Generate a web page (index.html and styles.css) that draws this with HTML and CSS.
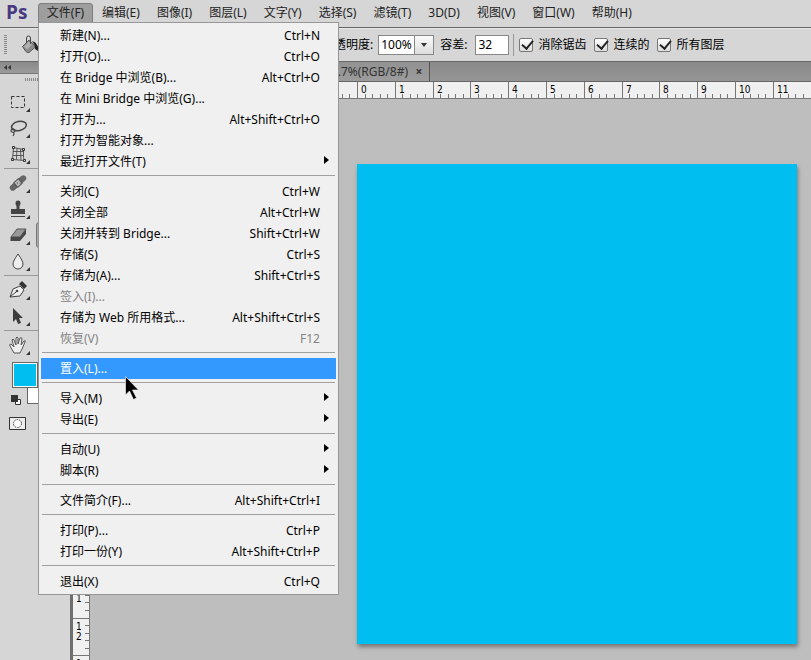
FILE: index.html
```html
<!DOCTYPE html>
<html lang="zh-CN">
<head>
<meta charset="utf-8">
<title>Photoshop</title>
<link rel="stylesheet" href="styles.css">
</head>
<body>
<header class="menubar">
  <span class="logo">Ps</span>
  <nav class="menus">
    <div class="menu-root">
      <button class="menu-title open">文件(F)</button>
      <div class="menu">
        <button class="item"><span>新建(N)...</span><kbd>Ctrl+N</kbd></button>
        <button class="item"><span>打开(O)...</span><kbd>Ctrl+O</kbd></button>
        <button class="item"><span>在 Bridge 中浏览(B)...</span><kbd>Alt+Ctrl+O</kbd></button>
        <button class="item"><span>在 Mini Bridge 中浏览(G)...</span></button>
        <button class="item"><span>打开为...</span><kbd>Alt+Shift+Ctrl+O</kbd></button>
        <button class="item"><span>打开为智能对象...</span></button>
        <button class="item sub"><span>最近打开文件(T)</span></button>
        <hr>
        <button class="item"><span>关闭(C)</span><kbd>Ctrl+W</kbd></button>
        <button class="item"><span>关闭全部</span><kbd>Alt+Ctrl+W</kbd></button>
        <button class="item"><span>关闭并转到 Bridge...</span><kbd>Shift+Ctrl+W</kbd></button>
        <button class="item"><span>存储(S)</span><kbd>Ctrl+S</kbd></button>
        <button class="item"><span>存储为(A)...</span><kbd>Shift+Ctrl+S</kbd></button>
        <button class="item" disabled><span>签入(I)...</span></button>
        <button class="item"><span>存储为 Web 所用格式...</span><kbd>Alt+Shift+Ctrl+S</kbd></button>
        <button class="item" disabled><span>恢复(V)</span><kbd>F12</kbd></button>
        <hr>
        <button class="item active"><span>置入(L)...</span></button>
        <hr>
        <button class="item sub"><span>导入(M)</span></button>
        <button class="item sub"><span>导出(E)</span></button>
        <hr>
        <button class="item sub"><span>自动(U)</span></button>
        <button class="item sub"><span>脚本(R)</span></button>
        <hr>
        <button class="item"><span>文件简介(F)...</span><kbd>Alt+Shift+Ctrl+I</kbd></button>
        <hr>
        <button class="item"><span>打印(P)...</span><kbd>Ctrl+P</kbd></button>
        <button class="item"><span>打印一份(Y)</span><kbd>Alt+Shift+Ctrl+P</kbd></button>
        <hr>
        <button class="item"><span>退出(X)</span><kbd>Ctrl+Q</kbd></button>
      </div>
    </div>
    <button class="menu-title">编辑(E)</button>
    <button class="menu-title">图像(I)</button>
    <button class="menu-title">图层(L)</button>
    <button class="menu-title">文字(Y)</button>
    <button class="menu-title">选择(S)</button>
    <button class="menu-title">滤镜(T)</button>
    <button class="menu-title">3D(D)</button>
    <button class="menu-title">视图(V)</button>
    <button class="menu-title">窗口(W)</button>
    <button class="menu-title">帮助(H)</button>
  </nav>
</header>

<section class="options">
  <div class="current-tool">
    <span class="grip-v"></span>
    <svg width="20" height="20" viewBox="0 0 20 20">
      <path d="M1.500 11.500 8 5l7 6.500-7 6q-2 .5-3.500-1.500z" fill="#8c8c8c" stroke="#555"/>
      <path d="M3 11.500 8 6.500l3 3-5 5z" fill="#b0b0b0"/>
      <path d="M5.500 8V3q0-2 2-2t2 2v6" fill="none" stroke="#444"/>
      <path d="M11 6q4 1 5 4 2 2 1 6l-3-2q0-5-3-8z" fill="#222"/>
    </svg>
  </div>
  <label for="opacity">不透明度:</label>
  <span class="combo"><input id="opacity" value="100%"><button aria-label="▾"><svg width="6" height="4" viewBox="0 0 6 4"><path d="M0 0h6L3 4z" fill="#333"/></svg></button></span>
  <label for="tolerance">容差:</label>
  <input id="tolerance" class="field" value="32">
  <span class="rule"></span>
  <label class="check"><input type="checkbox" checked>消除锯齿</label>
  <label class="check"><input type="checkbox" checked>连续的</label>
  <label class="check"><input type="checkbox" checked>所有图层</label>
</section>

<main class="workspace">
  <aside class="tools">
    <div class="tools-head"><svg width="8" height="5" viewBox="0 0 8 5"><path d="M3 0v5L0 2.500zM7 0v5L4 2.500z" fill="#333"/></svg></div>
    <div class="grip-h"></div>
    <div class="tool-group">
      <button class="tool"><svg viewBox="0 0 20 20"><path d="M3.500 4.500h13v11h-13z" fill="none" stroke="#333" stroke-dasharray="3 2"/></svg></button>
      <button class="tool"><svg viewBox="0 0 20 20"><ellipse cx="11" cy="8" rx="7.500" ry="4.500" transform="rotate(-12 11 8)" fill="none" stroke="#444" stroke-width="1.500"/><path d="M4 11q-2 2 0 3t3-1q-1-3-3-2M5 14q2 1 0 4" fill="none" stroke="#444" stroke-width="1.200"/></svg></button>
      <button class="tool"><svg viewBox="0 0 20 20"><path d="M5.500 3.500l10 2v8l1 3-12-1zM9 4l-.5 11.500M12.500 5l.5 11M5 7.500h10.500M5 11.500h10.500" fill="none" stroke="#555"/><path d="M4.500 2.500h2v2h-2zM14.500 4.500h2v2h-2zM3.500 14.500h2v2h-2zM15.500 15.500h2v2h-2z" fill="#ddd" stroke="#333"/></svg></button>
    </div>
    <div class="tool-group">
      <button class="tool"><svg viewBox="0 0 20 20"><g transform="rotate(-42 10 10)"><rect x="0" y="7" width="20" height="6" rx="3" fill="#666"/><rect x="7" y="7" width="6" height="6" fill="#bbb"/><path d="M7 7h6v6H7z" fill="none" stroke="#555"/><path d="M9 9h1v1H9zM11 11h1v1h-1z" fill="#444"/></g></svg></button>
      <button class="tool"><svg viewBox="0 0 20 20"><path d="M7.500 4a2.500 2.500 0 1 1 5 0q0 2-1 3v3H17v5H3v-5h5.500V7q-1-1-1-3z" fill="#444"/><path d="M3 17.500h14" stroke="#444"/></svg></button>
      <button class="tool"><svg viewBox="0 0 20 20"><path d="M9 4h9l-6 8H3z" fill="#999" stroke="#555"/><path d="M2.500 12H12v4H2.500zM12 12l6-8v5l-6 7z" fill="#484848"/></svg></button>
      <span class="tool selected"></span>
      <button class="tool"><svg viewBox="0 0 20 20"><path d="M10 3q5 7 5 10a5 5 0 0 1-10 0q0-3 5-10z" fill="#eee" stroke="#444"/></svg></button>
    </div>
    <div class="tool-group">
      <button class="tool"><svg viewBox="0 0 20 20"><path d="M2 17 5 9l7-3 4 4-4 6z" fill="#eee" stroke="#444"/><path d="M11 4l3-3 5 5-3 3z" fill="#333"/><path d="M2 17l6-5" stroke="#444"/><circle cx="9" cy="11" r="1.300" fill="#444"/></svg></button>
      <button class="tool"><svg viewBox="0 0 20 20"><path d="M5 2v14l3-3 2 5 3-1-2-5h4z" fill="#3c3c3c"/></svg></button>
    </div>
    <div class="tool-group last">
      <button class="tool"><svg viewBox="0 0 20 20"><path d="M6 18 2 11q-1-2 1-2l3 3-2-7q1-2 2 0l2 5V3q1-2 2 0v6l2-6q2-1 2 1l-1 6 3-4q2-1 1 1l-3 7-2 4z" fill="#eee" stroke="#555"/></svg></button>
    </div>
    <div class="colors">
      <span class="bg-color"></span>
      <button class="fg-color" aria-label="前景色"></button>
      <svg class="mini" width="10" height="10" viewBox="0 0 10 10"><path d="M4.500 4.500h5v5h-5z" fill="#fff" stroke="#333"/><path d="M0 0h7v7H0z" fill="#333"/></svg>
    </div>
    <button class="mask"><svg width="17" height="13" viewBox="0 0 17 13"><path d="M.5.500h16v12H.5z" fill="#eee" stroke="#333"/><circle cx="8.500" cy="6.500" r="4" fill="#fff" stroke="#333" stroke-dasharray="1.500 1"/></svg></button>
  </aside>

  <section class="document">
    <div class="tabs"><div class="tab">66.7%(RGB/8#)<button class="close">×</button></div></div>
    <svg class="ruler-x" id="rulerX"></svg>
    <div class="view">
      <svg class="ruler-y" id="rulerY"></svg>
      <div class="pasteboard"><div class="canvas"></div></div>
    </div>
  </section>
</main>

<svg class="cursor" width="14" height="24" viewBox="0 0 14 24"><path d="M.5.500v18.500l4-4 4 8.500 3-1.500-4-8h6z" fill="#000" stroke="#fff" stroke-width=".6"/></svg>
<script src="rulers.js"></script>
</body>
</html>
```
FILE: styles.css
```css
* { box-sizing: border-box; }
body {
  margin: 0;
  height: 100vh;
  display: flex;
  flex-direction: column;
  overflow: hidden;
  background: #d6d6d6;
  color: #000;
  font: 12px/20px "Noto Sans", "Noto Sans CJK SC", sans-serif;
}
button, input {
  margin: 0;
  padding: 0;
  border: 0;
  background: none;
  color: inherit;
  font: inherit;
}
svg { display: block; }

.menubar {
  display: flex;
  height: 28px;
  border-bottom: 1px solid #666;
}
.logo {
  width: 38px;
  padding-left: 6px;
  color: #473a83;
  font: bold 19px/25px "Open Sans", sans-serif;
}
.menus { display: flex; gap: 1px; padding-top: 3px; }
.menu-root { position: relative; }
.menu-title {
  height: 20px;
  padding: 0 8px;
  color: #222;
  white-space: nowrap;
}
.menu-title.open {
  width: 55px;
  border: 1px solid #7d7d7d;
  border-radius: 3px 3px 0 0;
  background: #9e9e9e;
  line-height: 18px;
  padding: 0 6px;
}
.menu {
  position: absolute;
  z-index: 5;
  top: 19px;
  left: 0;
  width: 301px;
  padding: 2px;
  border: 1px solid #979797;
  background: #f0f0f0;
}
.menu hr {
  height: 1px;
  margin: 3px 1px 5px;
  border: 0;
  background: #a0a0a0;
}
.item {
  position: relative;
  display: flex;
  justify-content: space-between;
  width: 100%;
  height: 21px;
  padding: 0 16px 0 19px;
  line-height: 21px;
}
.item kbd { font: inherit; }
.item:disabled { color: #838383; }
.item.active { background: #3399ff; color: #fff; }
.item.sub::after {
  content: "";
  align-self: center;
  margin: -4px -9px 0 0;
  border: 4px solid transparent;
  border-left: 5px solid #000;
  border-right: 0;
}

.options {
  display: flex;
  align-items: center;
  height: 34px;
  border-top: 1px solid #e8e8e8;
  border-bottom: 1px solid #6a6a6a;
  white-space: nowrap;
}
.current-tool {
  display: flex;
  align-items: center;
  gap: 14px;
  width: 322px;
  padding-left: 4px;
}
.grip-v {
  width: 3px;
  height: 20px;
  background: repeating-linear-gradient(#888 0 1px, transparent 1px 2px);
}
.combo {
  display: flex;
  width: 56px;
  height: 20px;
  margin: 0 6px 0 5px;
  border: 1px solid #888;
  background: #fff;
}
.combo input { width: 35px; padding-left: 2px; }
.combo button {
  display: grid;
  flex: 1;
  place-items: center;
  border-left: 1px solid #888;
  background: linear-gradient(#fafafa, #ddd);
}
.field {
  width: 34px;
  height: 20px;
  margin-left: 8px;
  padding-left: 2px;
  border: 1px solid #888;
  background: #fff;
}
.rule { width: 1px; height: 22px; margin: 0 5px 0 4px; background: #999; }
.check { display: flex; align-items: center; gap: 5px; margin-right: 8px; }
.check input {
  appearance: none;
  width: 14px;
  height: 14px;
  border: 1px solid #777;
  border-radius: 2px;
  background: linear-gradient(#fff, #ddd);
}
.check input:checked::after {
  content: "";
  display: block;
  width: 5px;
  height: 9px;
  margin: -1px 0 0 4px;
  border: solid #222;
  border-width: 0 2px 2px 0;
  transform: rotate(40deg);
}

.workspace { display: flex; flex: 1; min-height: 0; }
.tools { width: 70px; }
.tools-head {
  height: 12px;
  padding: 3px 4px;
  border-bottom: 1px solid #777;
  background: linear-gradient(#8a8a8a, #9a9a9a);
}
.grip-h {
  width: 20px;
  height: 3px;
  margin: 4px auto 8px;
  background: repeating-linear-gradient(90deg, #888 0 1px, transparent 1px 2px);
}
.tool-group {
  display: grid;
  grid-template-columns: 30px 32px;
  grid-auto-rows: 26px;
  margin-left: 4px;
  border-bottom: 1px solid #999;
  padding-bottom: 1px;
}
.tool-group + .tool-group { padding-top: 1px; }
.tool-group.last { border: 0; }
.tool {
  position: relative;
  grid-column: 1;
  display: grid;
  place-items: center;
  padding-right: 3px;
}
.tool svg { width: 20px; height: 20px; }
.tool::after {
  content: "";
  position: absolute;
  right: 4px;
  bottom: 3px;
  border: 2px solid #333;
  border-top-color: transparent;
  border-left-color: transparent;
}
.tool.selected {
  grid-column: 2;
  grid-row: 3;
  margin-left: 2px;
  border: 1px solid #777;
  border-radius: 3px;
  background: #aaa;
}
.tool.selected::after { display: none; }
.colors { position: relative; height: 57px; margin-left: 11px; }
.fg-color, .bg-color {
  position: absolute;
  top: 3px;
  left: 1px;
  width: 26px;
  height: 26px;
  border: 1px solid #666;
  box-shadow: inset 0 0 0 1px #fff;
  background: #00bff0;
}
.bg-color { top: 19px; left: 16px; background: #fff; }
.mini { position: absolute; left: 0; top: 36px; }
.mask { margin-left: 9px; }

.document {
  display: flex;
  flex: 1;
  flex-direction: column;
  min-width: 0;
  border-left: 3px solid #6e6e6e;
  background: #bebebe;
}
.tabs {
  display: flex;
  height: 20px;
  border-bottom: 1px solid #666;
  background: linear-gradient(#8a8a8a, #959595);
}
.tab {
  display: flex;
  justify-content: flex-end;
  width: 357px;
  padding-right: 5px;
  border-right: 1px solid #555;
  background: linear-gradient(#929292, #9c9c9c);
  color: #333;
}
.close { width: 10px; margin-left: 6px; font-weight: bold; line-height: 18px; }
.ruler-x {
  width: 100%;
  height: 17px;
  border-bottom: 1px solid #777;
  background: #f0f0f0;
}
.view { display: flex; flex: 1; min-height: 0; }
.ruler-y {
  width: 17px;
  height: 100%;
  border-right: 1px solid #777;
  background: #f0f0f0;
}
.ruler-x, .ruler-y { font: 10px "DejaVu Sans Condensed", "DejaVu Sans", sans-serif; }
.pasteboard { flex: 1; padding: 65px 14px 16px 267px; }
.canvas {
  height: 100%;
  background: #00bff0;
  box-shadow: 1px 3px 4px #777;
}
.cursor { position: absolute; z-index: 9; left: 125px; top: 376px; }
```
FILE: rulers.js
```js
// Centimetre rulers: one long tick per centimetre, five divisions each.
const CM = 37.8;
const NS = 'http://www.w3.org/2000/svg';

function add(svg, name, attrs, text) {
  const el = document.createElementNS(NS, name);
  for (const key in attrs) el.setAttribute(key, attrs[key]);
  if (text !== undefined) el.textContent = text;
  svg.appendChild(el);
}

function ruler(svg, zero, vertical) {
  const box = svg.getBoundingClientRect();
  const length = vertical ? box.height : box.width;
  for (let i = -40; ; i++) {
    const p = Math.round(zero + i * CM / 5);
    if (p < 0) continue;
    if (p > length) break;
    const major = i % 5 === 0;
    const len = major ? 17 : 4;
    add(svg, 'rect', vertical
      ? { x: 16 - len, y: p, width: len, height: 1, fill: '#777' }
      : { x: p, y: 16 - len, width: 1, height: len, fill: '#777' });
    if (!major) continue;
    const label = String(Math.abs(i / 5));
    if (vertical) {
      [...label].forEach((d, n) => {
        const y = p + 12 + n * 10;
        if (y < length + 8) add(svg, 'text', { x: 3, y }, d);
      });
    } else if (p + 12 < length) {
      add(svg, 'text', { x: p + 4, y: 11 }, label);
    }
  }
}

ruler(document.getElementById('rulerX'), 284, false);
ruler(document.getElementById('rulerY'), 65, true);
```
